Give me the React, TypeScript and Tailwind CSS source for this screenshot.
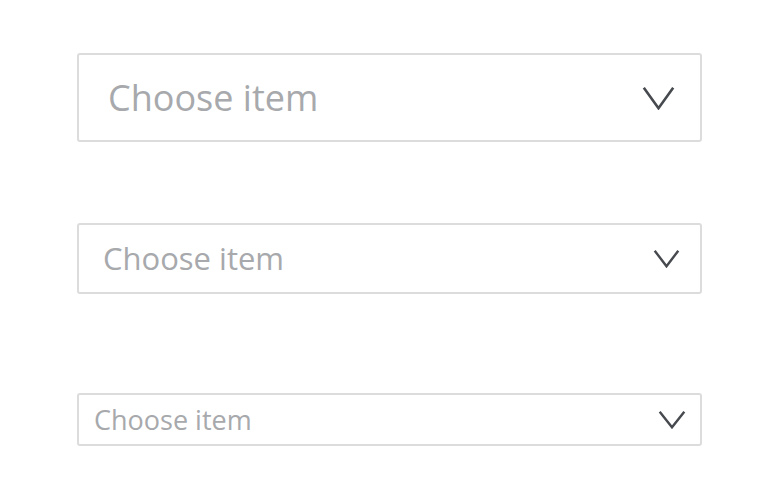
const Chevron = ({ w, h, sw }: { w: number; h: number; sw: number }) => (
  <svg width={w} height={h} viewBox={`0 0 ${w} ${h}`} fill="none">
    <polyline
      points={`${sw / 2 + 0.5},${sw / 2 + 0.5} ${w / 2},${h - sw / 2 - 0.5} ${w - sw / 2 - 0.5},${sw / 2 + 0.5}`}
      stroke="#46494e"
      strokeWidth={sw}
      strokeLinecap="butt"
      strokeLinejoin="miter"
    />
  </svg>
);

export default function App() {
  return (
    <div className="min-h-screen w-full bg-white font-['Open_Sans',sans-serif]">
      <div className="flex flex-col pl-[77px] pt-[53px] w-[702px]">
        {/* large */}
        <div className="flex h-[89px] items-center justify-between rounded-[3px] border-2 border-[#dcdcdc] pl-[29px] pr-[25px]">
          <span className="text-[36px] text-[#a7a9ac] leading-none">Choose item</span>
          <Chevron w={33} h={24} sw={2.6} />
        </div>

        {/* medium */}
        <div className="mt-[81px] flex h-[71px] items-center justify-between rounded-[3px] border-2 border-[#dcdcdc] pl-[24px] pr-[20px]">
          <span className="text-[31px] text-[#a7a9ac] leading-none">Choose item</span>
          <Chevron w={27} h={19} sw={2.4} />
        </div>

        {/* small */}
        <div className="mt-[99px] flex h-[53px] items-center justify-between rounded-[3px] border-2 border-[#dcdcdc] pl-[15px] pr-[14px]">
          <span className="text-[27px] text-[#a7a9ac] leading-none">Choose item</span>
          <Chevron w={28} h={19} sw={2.4} />
        </div>
      </div>
    </div>
  );
}
